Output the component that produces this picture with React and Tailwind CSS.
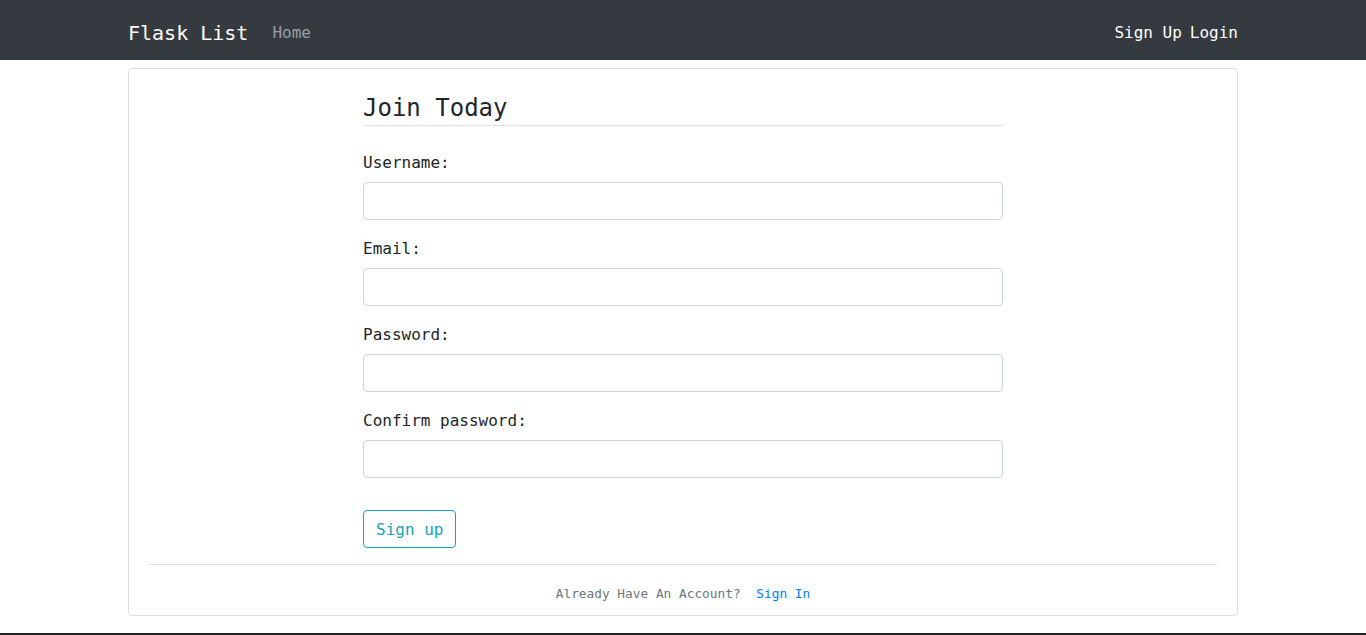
import { useState } from "react";

const mono = { fontFamily: '"DejaVu Sans Mono", "Liberation Mono", monospace' };

function Field({ label, type, value, onChange }) {
  return (
    <div className="mb-4">
      <label className="block mb-2 pt-px h-6 text-base leading-6 text-[#212529]">{label}</label>
      <input
        type={type}
        value={value}
        onChange={onChange}
        className="block w-full h-[38px] px-3 rounded border border-[#ced4da] bg-white text-base text-[#495057] outline-none"
      />
    </div>
  );
}

export default function App() {
  const [form, setForm] = useState({ username: "", email: "", password: "", confirm: "" });

  const update = (key) => (e) => setForm({ ...form, [key]: e.target.value });

  return (
    <div className="min-h-[635px] bg-white" style={mono}>
      {/* Navbar */}
      <nav className="h-[60px] bg-[#343a40]">
        <div className="w-[1110px] mx-auto h-full pt-[5px] flex items-center justify-between">
          <div className="flex items-center">
            <a href="#" className="text-[20px] leading-[30px] text-white mr-4">Flask List</a>
            <a href="#" className="px-2 text-base text-[#9a9da0]">Home</a>
          </div>
          <div className="flex items-center text-base text-white">
            <a href="#">Sign Up</a>
            <a href="#" className="ml-2">Login</a>
          </div>
        </div>
      </nav>

      {/* Card */}
      <div className="w-[1110px] mx-auto mt-2 border border-[#dfdfdf] rounded bg-white">
        <div className="px-5 pt-5 pb-[9px]">
          <form className="w-[640px] mx-auto" onSubmit={(e) => e.preventDefault()}>
            <fieldset>
              <legend className="w-full pt-[2px] h-[37px] text-[24px] leading-[34px] text-[#212529] border-b border-[#dee2e6] mb-6">
                Join Today
              </legend>
              <Field label="Username:" type="text" value={form.username} onChange={update("username")} />
              <Field label="Email:" type="email" value={form.email} onChange={update("email")} />
              <Field label="Password:" type="password" value={form.password} onChange={update("password")} />
              <Field label="Confirm password:" type="password" value={form.confirm} onChange={update("confirm")} />
            </fieldset>
            <div className="pt-4">
              <button
                type="submit"
                className="h-[38px] px-3 pt-px rounded border border-[#17a2b8] text-base text-[#17a2b8] bg-white"
              >
                Sign up
              </button>
            </div>
          </form>
          <hr className="mt-4 border-0 border-t border-[#dee2e6]" />
          <div className="pt-4 text-center leading-6">
            <small className="text-[12.8px] text-[#6c757d]">
              Already Have An Account? <a href="#" className="ml-2 text-[#007bff]">Sign In</a>
            </small>
          </div>
        </div>
      </div>

      <div className="mt-[17px] h-[2px] bg-[#222]" />
    </div>
  );
}
